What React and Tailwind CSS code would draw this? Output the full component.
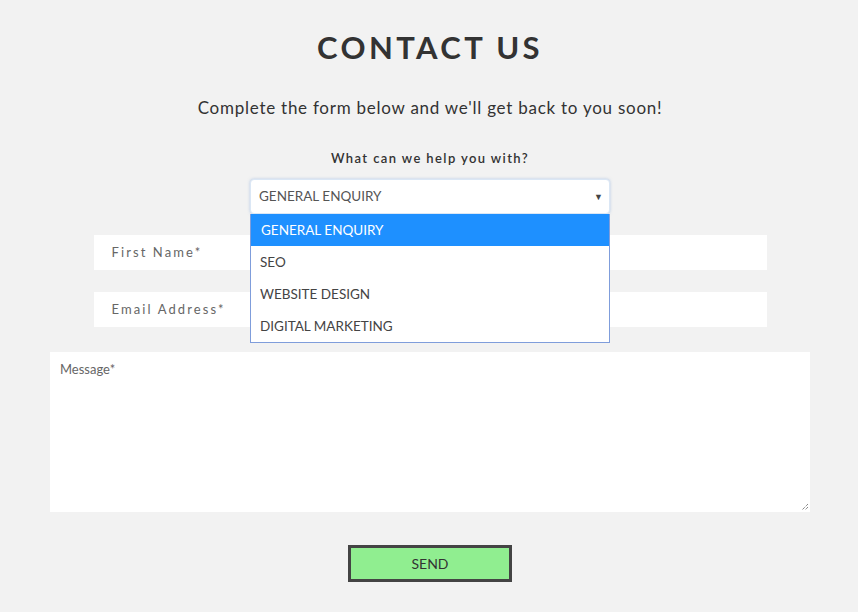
import React from 'react';

const options = ['GENERAL ENQUIRY', 'SEO', 'WEBSITE DESIGN', 'DIGITAL MARKETING'];

export default function App() {
  return (
    <div className="min-h-screen w-full bg-[#f2f2f2] font-['Lato','Liberation_Sans',sans-serif] flex flex-col items-center pt-[29px] pl-[2px]">
      {/* Heading */}
      <h1 className="text-[31px] leading-[36px] font-bold tracking-[3.4px] text-[#333333]">CONTACT US</h1>
      <p className="mt-[31px] text-[17px] leading-[24px] tracking-[0.75px] text-[#333333]">
        Complete the form below and we'll get back to you soon!
      </p>
      <p className="mt-[29px] text-[13px] leading-[18px] font-semibold tracking-[1.4px] text-[#333333]">
        What can we help you with?
      </p>

      {/* Select with open list */}
      <div className="relative mt-[12px] w-[360px] z-10">
        <div className="h-[35px] bg-white rounded-[4px] border border-[#dbe7f5] shadow-[0_0_3px_rgba(120,160,220,0.5)] flex items-center justify-between pl-[8px] pr-[6px]">
          <span className="text-[13.5px] text-[#555555]">GENERAL ENQUIRY</span>
          <span className="text-[9px] text-[#444444]">▼</span>
        </div>
        <ul className="absolute left-0 top-[35px] w-full bg-white border border-[#7f9ddb] border-t-0">
          {options.map((o, i) => (
            <li
              key={o}
              className={
                i === 0
                  ? 'h-[32px] flex items-center pl-[10px] text-[13.5px] bg-[#1e90ff] text-white'
                  : 'h-[32px] flex items-center pl-[9px] text-[13.5px] text-[#444444]'
              }
            >
              {o}
            </li>
          ))}
        </ul>
      </div>

      {/* Inputs */}
      <div className="mt-[21px] w-[673px] h-[35px] bg-white flex items-center pl-[18px] text-[13px] tracking-[2.1px] text-[#666666]">
        First Name*
      </div>
      <div className="mt-[22px] w-[673px] h-[35px] bg-white flex items-center pl-[18px] text-[13px] tracking-[2.1px] text-[#666666]">
        Email Address*
      </div>

      <div className="relative mt-[25px] w-[760px] h-[160px] bg-white pl-[10px] pt-[8px] text-[13px] text-[#666666]">
        Message*
        <svg className="absolute right-[1px] bottom-[1px]" width="9" height="9" viewBox="0 0 9 9">
          <path d="M8 2 L2 8 M8 5 L5 8" stroke="#555" strokeWidth="1" strokeDasharray="1 1" />
        </svg>
      </div>

      <button className="mt-[33px] w-[164px] h-[37px] bg-[#90ee90] border-[3px] border-[#444444] text-[14px] text-[#333333]">
        SEND
      </button>
    </div>
  );
}
